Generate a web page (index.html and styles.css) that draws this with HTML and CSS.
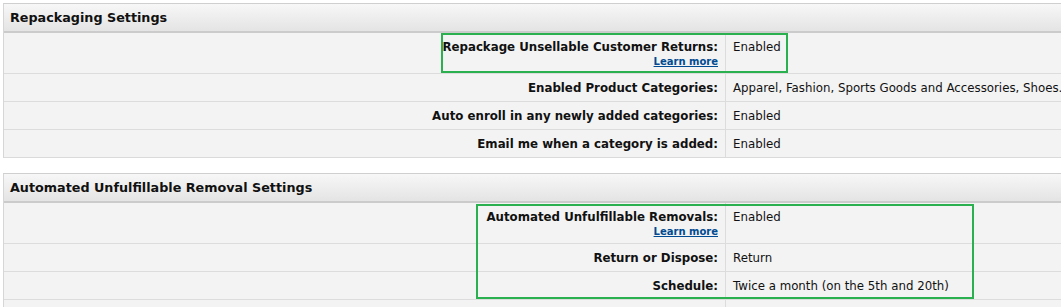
FILE: index.html
```html
<!DOCTYPE html>
<html lang="en">
<head>
  <title>Settings</title>
  <link rel="stylesheet" href="styles.css">
</head>
<body>

  <!-- Repackaging -->
  <div class="panel">
    <div class="panel-head">Repackaging Settings</div>
    <div class="row tall">
      <div class="label">Repackage Unsellable Customer Returns:<a href="#">Learn more</a></div>
      <div class="value">Enabled</div>
    </div>
    <div class="row">
      <div class="label">Enabled Product Categories:</div>
      <div class="value">Apparel, Fashion, Sports Goods and Accessories, Shoes.</div>
    </div>
    <div class="row">
      <div class="label">Auto enroll in any newly added categories:</div>
      <div class="value">Enabled</div>
    </div>
    <div class="row">
      <div class="label">Email me when a category is added:</div>
      <div class="value">Enabled</div>
    </div>
    <span class="mark mark-one"></span>
  </div>

  <!-- Removals -->
  <div class="panel">
    <div class="panel-head">Automated Unfulfillable Removal Settings</div>
    <div class="row tall">
      <div class="label">Automated Unfulfillable Removals:<a href="#">Learn more</a></div>
      <div class="value">Enabled</div>
    </div>
    <div class="row">
      <div class="label">Return or Dispose:</div>
      <div class="value">Return</div>
    </div>
    <div class="row">
      <div class="label">Schedule:</div>
      <div class="value">Twice a month (on the 5th and 20th)</div>
    </div>
    <div class="row">
      <div class="label"></div>
      <div class="value"></div>
    </div>
    <span class="mark mark-two"></span>
  </div>

</body>
</html>
```

FILE: styles.css
```css
* {
  box-sizing: border-box;
  margin: 0;
  padding: 0;
}

body {
  font-family: "DejaVu Sans", Verdana, sans-serif;
  font-size: 11.8px;
  color: #111;
  background: white;
  padding: 3px 0 0 3px;
  overflow: hidden;
  width: 1061px;
  height: 307px;
}

.panel {
  position: relative;
  width: 1080px;
  border-left: 1px solid #d6d6d6;
  border-top: 1px solid #cfcfcf;
  border-bottom: 1px solid #dadada;
  margin-bottom: 15px;
}

.panel-head {
  height: 29px;
  padding: 0 6px;
  line-height: 28px;
  font-size: 12.75px;
  font-weight: bold;
  color: #111;
  background: linear-gradient(#f7f7f7, #e4e4e4);
  border-bottom: 2px solid #cbcbcb;
}

.row {
  display: grid;
  grid-template-columns: 722px 1fr;
  height: 28px;
  background: #f3f3f3;
  border-top: 1px solid #dcdcdc;
}

.row:nth-child(2) {
  border-top: none;
}

.row.tall {
  height: 40px;
}

.label {
  text-align: right;
  font-weight: bold;
  padding: 7px 7px 0 0;
  border-right: 1px solid #dcdcdc;
}

.label a {
  display: block;
  margin-top: 2px;
  font-size: 10px;
  line-height: 12px;
  color: #004b91;
  text-decoration: underline;
}

.value {
  padding: 7px 0 0 7px;
}

.mark {
  position: absolute;
  border: 2px solid #2bb04f;
}

.mark-one {
  left: 437px;
  top: 29px;
  width: 347px;
  height: 40px;
}

.mark-two {
  left: 472px;
  top: 30px;
  width: 498px;
  height: 95px;
}
```
